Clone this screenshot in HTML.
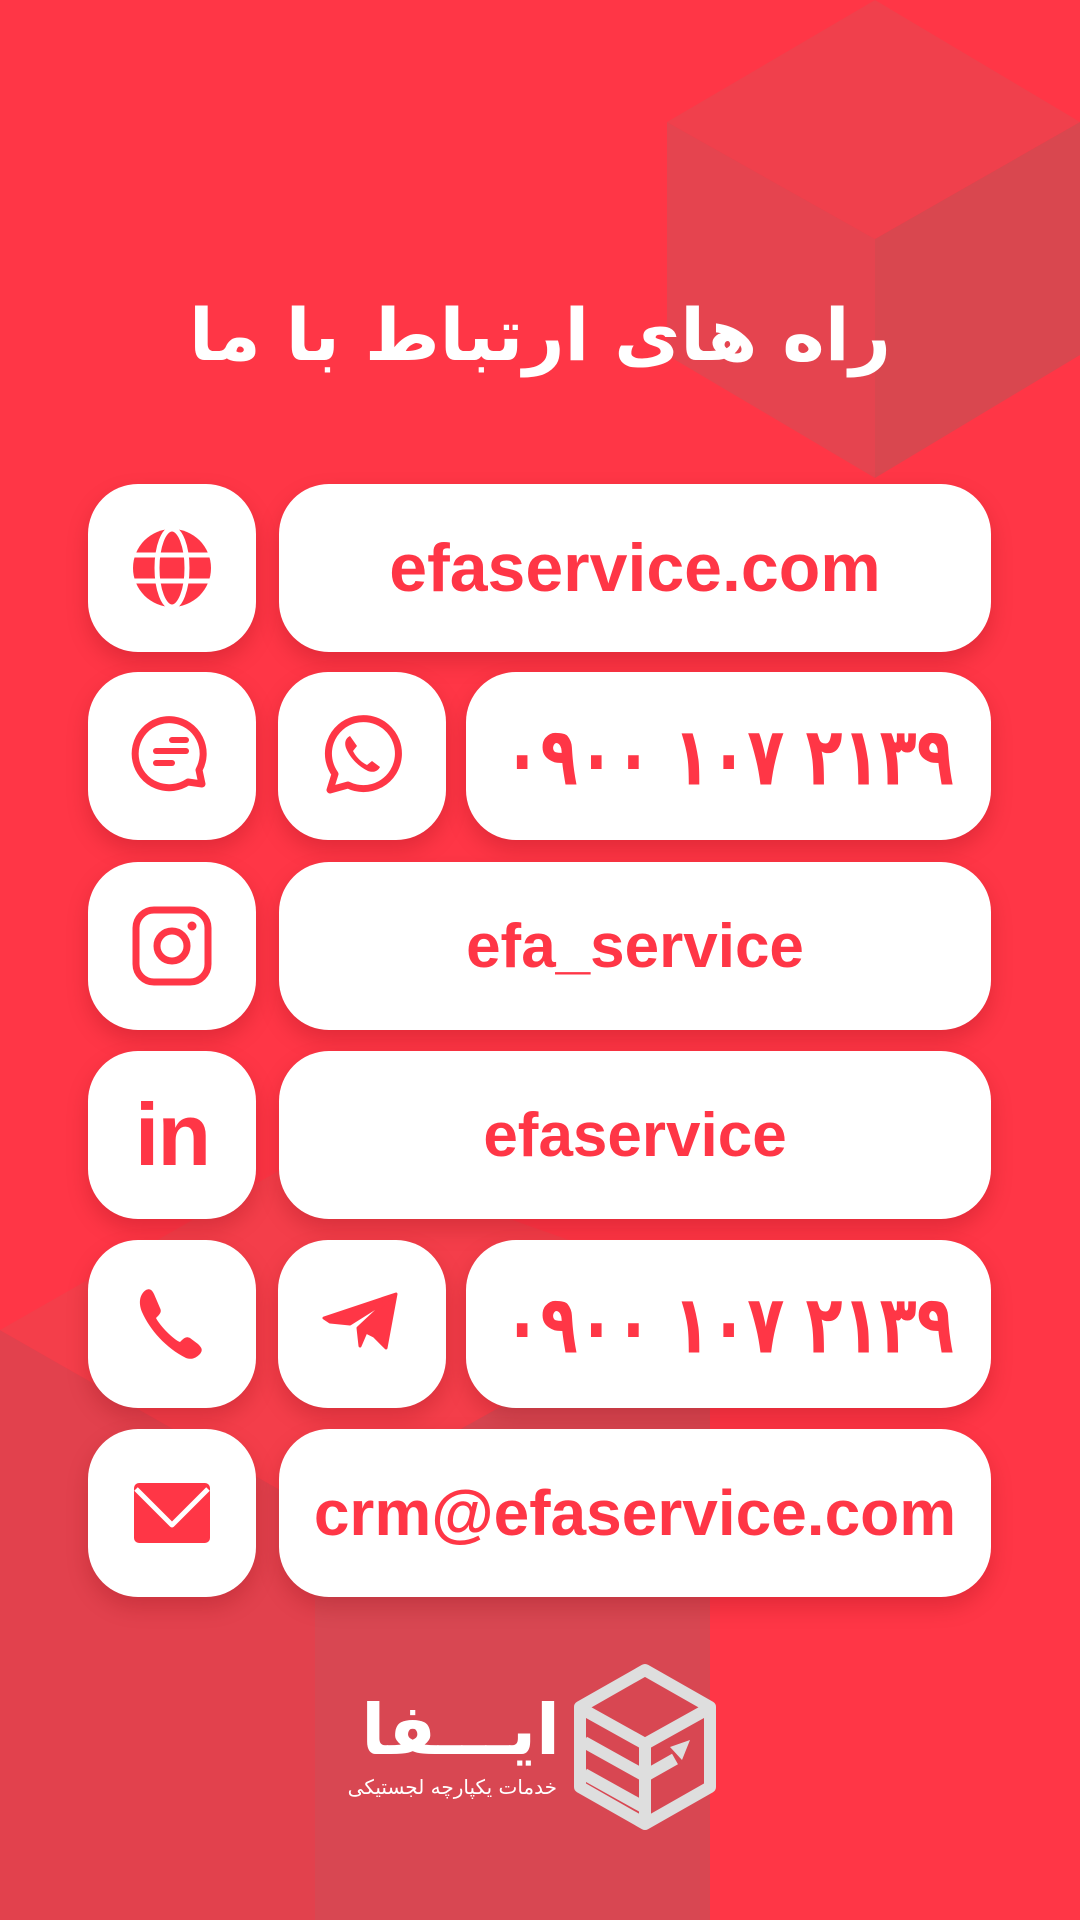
<!DOCTYPE html>
<html><head><meta charset="utf-8">
<style>
html,body{margin:0;padding:0}
body{width:1080px;height:1920px;position:relative;overflow:hidden;background:#ff3646;font-family:"Liberation Sans",sans-serif}
.bx{position:absolute;background:#fff;border-radius:50px;box-shadow:0 10px 22px rgba(120,0,10,0.22);display:flex;align-items:center;justify-content:center;color:#ff3646;font-weight:bold;white-space:nowrap}
.ic{width:168px}
.fa span{display:inline-block;font-family:"DejaVu Sans",sans-serif;font-size:62px;font-weight:bold;letter-spacing:-5px;transform:scale(0.98,1.3);white-space:nowrap}
svg{display:block}
</style></head><body>
<svg width="1080" height="1920" style="position:absolute;left:0;top:0">
<polygon points="667,122 875,0 1080,122 875,239" fill="#f0404c"/>
<polygon points="667,122 875,239 875,478 667,355" fill="#e5444f"/>
<polygon points="875,239 1080,122 1080,355 875,478" fill="#d9474f"/>
<polygon points="0,1330 315,1510 315,1920 0,1920" fill="#e2414d"/>
<polygon points="315,1510 710,1290 710,1920 315,1920" fill="#d84752"/>
<polygon points="0,1330 315,1150 710,1290 315,1510" fill="#f43e4a"/>
</svg>
<div style="position:absolute;left:0;width:1080px;top:285px;text-align:center;color:#fff;font-family:'DejaVu Sans',sans-serif;font-weight:bold;font-size:72px;line-height:100px;white-space:nowrap" dir="rtl">راه های ارتباط با ما</div>

<div class="bx ic" style="left:88px;top:484px;height:168px">
<svg width="80" height="80" viewBox="0 0 80 80"><circle cx="40" cy="40" r="39" fill="#ff3646"/><g stroke="#fff" stroke-width="5" fill="none"><ellipse cx="40" cy="40" rx="15" ry="39"/><line x1="0" y1="27" x2="80" y2="27"/><line x1="0" y1="53" x2="80" y2="53"/></g></svg>
</div>
<div class="bx" style="left:279px;top:484px;width:712px;height:168px;font-size:68px">efaservice.com</div>

<div class="bx ic" style="left:88px;top:672px;height:168px">
<svg width="84" height="84" viewBox="0 0 84 84"><path d="M72 70 L69 56 A34 34 0 1 0 58 68 Z" fill="none" stroke="#ff3646" stroke-width="7" stroke-linejoin="round"/><g stroke="#ff3646" stroke-width="6" stroke-linecap="round"><line x1="42" y1="26" x2="56" y2="26"/><line x1="26" y1="37" x2="56" y2="37"/><line x1="26" y1="49" x2="42" y2="49"/></g></svg>
</div>
<div class="bx ic" style="left:278px;top:672px;height:168px">
<svg width="84" height="84" viewBox="0 0 84 84"><path d="M10 76 L15 60 A35 35 0 1 1 28 71 Z" fill="none" stroke="#ff3646" stroke-width="7" stroke-linejoin="round"/><path d="M30 22 C26 24 24 28 26 34 C30 44 38 52 48 57 C54 59 58 57 60 53 L52 47 L47 51 C41 48 36 43 33 37 L37 32 Z" fill="#ff3646"/></svg>
</div>
<div class="bx fa" style="left:466px;top:672px;width:525px;height:168px"><span dir="ltr">۰۹۰۰ ۱۰۷ ۲۱۳۹</span></div>

<div class="bx ic" style="left:88px;top:862px;height:168px">
<svg width="80" height="80" viewBox="0 0 80 80"><rect x="4" y="4" width="72" height="72" rx="18" fill="none" stroke="#ff3646" stroke-width="7"/><circle cx="40" cy="40" r="15" fill="none" stroke="#ff3646" stroke-width="7"/><circle cx="60" cy="20" r="4.5" fill="#ff3646"/></svg>
</div>
<div class="bx" style="left:279px;top:862px;width:712px;height:168px;font-size:62px">efa_service</div>

<div class="bx ic" style="left:88px;top:1051px;height:168px;font-size:88px;letter-spacing:-2px">in</div>
<div class="bx" style="left:279px;top:1051px;width:712px;height:168px;font-size:62px">efaservice</div>

<div class="bx ic" style="left:88px;top:1240px;height:168px">
<svg width="84" height="84" viewBox="0 0 84 84"><path d="M16 8 C10 12 8 20 12 30 C20 48 36 66 56 76 C62 78 66 76 70 72 C73 68 72 66 68 62 L60 56 C56 54 54 56 50 60 C44 58 30 44 26 36 C30 32 32 30 30 26 L24 12 C22 8 20 6 16 8 Z" fill="#ff3646"/></svg>
</div>
<div class="bx ic" style="left:278px;top:1240px;height:168px">
<svg width="84" height="84" viewBox="0 0 84 84"><path d="M4 36 L76 12 L66 66 L54 54 L46 50 L40 64 L38 46 L68 18 L30 42 L10 40 Z" fill="#ff3646" stroke="#ff3646" stroke-width="3" stroke-linejoin="round"/></svg>
</div>
<div class="bx fa" style="left:466px;top:1240px;width:525px;height:168px"><span dir="ltr">۰۹۰۰ ۱۰۷ ۲۱۳۹</span></div>

<div class="bx ic" style="left:88px;top:1429px;height:168px">
<svg width="80" height="64" viewBox="0 0 80 64"><rect x="2" y="2" width="76" height="60" rx="5" fill="#ff3646"/><path d="M4 8 L40 44 L76 8" fill="none" stroke="#fff" stroke-width="5" stroke-linejoin="round"/></svg>
</div>
<div class="bx" style="left:279px;top:1429px;width:712px;height:168px;font-size:64px">crm@efaservice.com</div>

<svg width="150" height="170" viewBox="0 0 150 170" style="position:absolute;left:570px;top:1662px">
<g fill="none" stroke="#dedede" stroke-width="12" stroke-linejoin="round">
<polygon points="75,8 140,45 140,125 75,162 10,125 10,45"/>
<polyline points="14,48 75,82 136,48"/>
<line x1="75" y1="82" x2="75" y2="158"/>
<polyline points="14,80 75,114 105,97"/>
<polyline points="14,112 75,146"/>
</g>
<path d="M100 85 L120 78 L112 98 Z" fill="#dedede"/>
</svg>
<div style="position:absolute;left:360px;top:1685px;width:200px;text-align:right;color:#fff;font-family:'DejaVu Sans',sans-serif;font-weight:bold;font-size:70px;line-height:90px;white-space:nowrap" dir="rtl">ایـــفا</div>
<div style="position:absolute;left:300px;top:1772px;width:257px;text-align:right;color:#fff;font-family:'DejaVu Sans',sans-serif;font-size:20px;line-height:30px;white-space:nowrap" dir="rtl">خدمات یکپارچه لجستیکی</div>
</body></html>
